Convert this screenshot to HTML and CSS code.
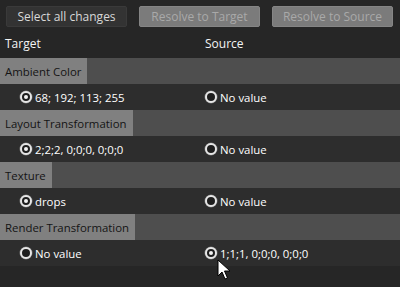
FILE: index.html
```html
<html>
<head>
  <meta charset="UTF-8">
  <title>Resolve Changes</title>
  <link rel="stylesheet" href="styles.css">
</head>
<body>
  <div class="panel">
    <div class="toolbar">
      <button class="btn">Select all changes</button>
      <button class="btn disabled">Resolve to Target</button>
      <button class="btn disabled">Resolve to Source</button>
    </div>

    <div class="col-head">
      <div class="cell">Target</div>
      <div class="cell">Source</div>
    </div>

    <div class="group">
      <div class="group-head"><span class="group-label">Ambient Color</span></div>
      <div class="row">
        <div class="cell target"><span class="radio checked"></span>68; 192; 113; 255</div>
        <div class="cell source"><span class="radio"></span>No value</div>
      </div>
    </div>

    <div class="group">
      <div class="group-head"><span class="group-label">Layout Transformation</span></div>
      <div class="row">
        <div class="cell target"><span class="radio checked"></span>2;2;2, 0;0;0, 0;0;0</div>
        <div class="cell source"><span class="radio"></span>No value</div>
      </div>
    </div>

    <div class="group">
      <div class="group-head"><span class="group-label">Texture</span></div>
      <div class="row">
        <div class="cell target"><span class="radio checked"></span>drops</div>
        <div class="cell source"><span class="radio"></span>No value</div>
      </div>
    </div>

    <div class="group">
      <div class="group-head"><span class="group-label">Render Transformation</span></div>
      <div class="row">
        <div class="cell target"><span class="radio"></span>No value</div>
        <div class="cell source"><span class="radio checked"></span>1;1;1, 0;0;0, 0;0;0</div>
      </div>
    </div>

    <!-- mouse pointer -->
    <svg class="cursor" width="14" height="22" viewBox="0 0 14 22">
      <path d="M1 1 L1 17 L5 13 L8 20 L10.5 19 L7.5 12 L13 12 Z" fill="#fff" stroke="#000" stroke-width="1"/>
    </svg>
  </div>
</body>
</html>
```

FILE: styles.css
```css
body {
  margin: 0;
  background-color: #262626;
  font-family: "Open Sans", "Noto Sans", sans-serif;
  font-size: 11.4px;
  color: #fff;
}

.panel {
  position: relative;
  width: 400px;
  height: 287px;
  background-color: #262626;
}

.toolbar {
  display: flex;
  gap: 12px;
  padding: 6px 6px 0 6px;
}

.btn {
  width: 121px;
  height: 21px;
  padding: 0;
  border: 1px solid #3a3a3a;
  border-radius: 2px;
  background-color: #333333;
  color: #d8d8d8;
  font-family: inherit;
  font-size: 12px;
}

.btn.disabled {
  background-color: #7b7b7b;
  border-color: #858585;
  color: #a9a9a9;
}

.col-head {
  display: flex;
  height: 31px;
  align-items: center;
  padding-top: 2px;
  box-sizing: border-box;
  color: #f4f4f4;
  font-size: 12px;
}

.cell {
  width: 200px;
  display: flex;
  align-items: center;
  padding-left: 5px;
  box-sizing: border-box;
}

.group-head {
  height: 26px;
  background-color: #4e4e4e;
  display: flex;
}

.group-label {
  display: flex;
  align-items: center;
  padding: 0 6px 0 5px;
  background-color: #808080;
  color: #141414;
}

.row {
  display: flex;
  height: 26px;
  background-color: #2d2d2d;
}

.cell.target {
  padding-left: 20px;
}

.radio {
  width: 8px;
  height: 8px;
  border: 2px solid #e6e6e6;
  border-radius: 50%;
  background-color: #1e1e1e;
  margin-right: 3px;
  position: relative;
  box-shadow: 0 0 0 0.5px #777;
}

.radio.checked::after {
  content: "";
  position: absolute;
  left: 2px;
  top: 2px;
  width: 4px;
  height: 4px;
  border-radius: 50%;
  background-color: #f2f2f2;
}

.cursor {
  position: absolute;
  left: 217px;
  top: 259px;
}
```
